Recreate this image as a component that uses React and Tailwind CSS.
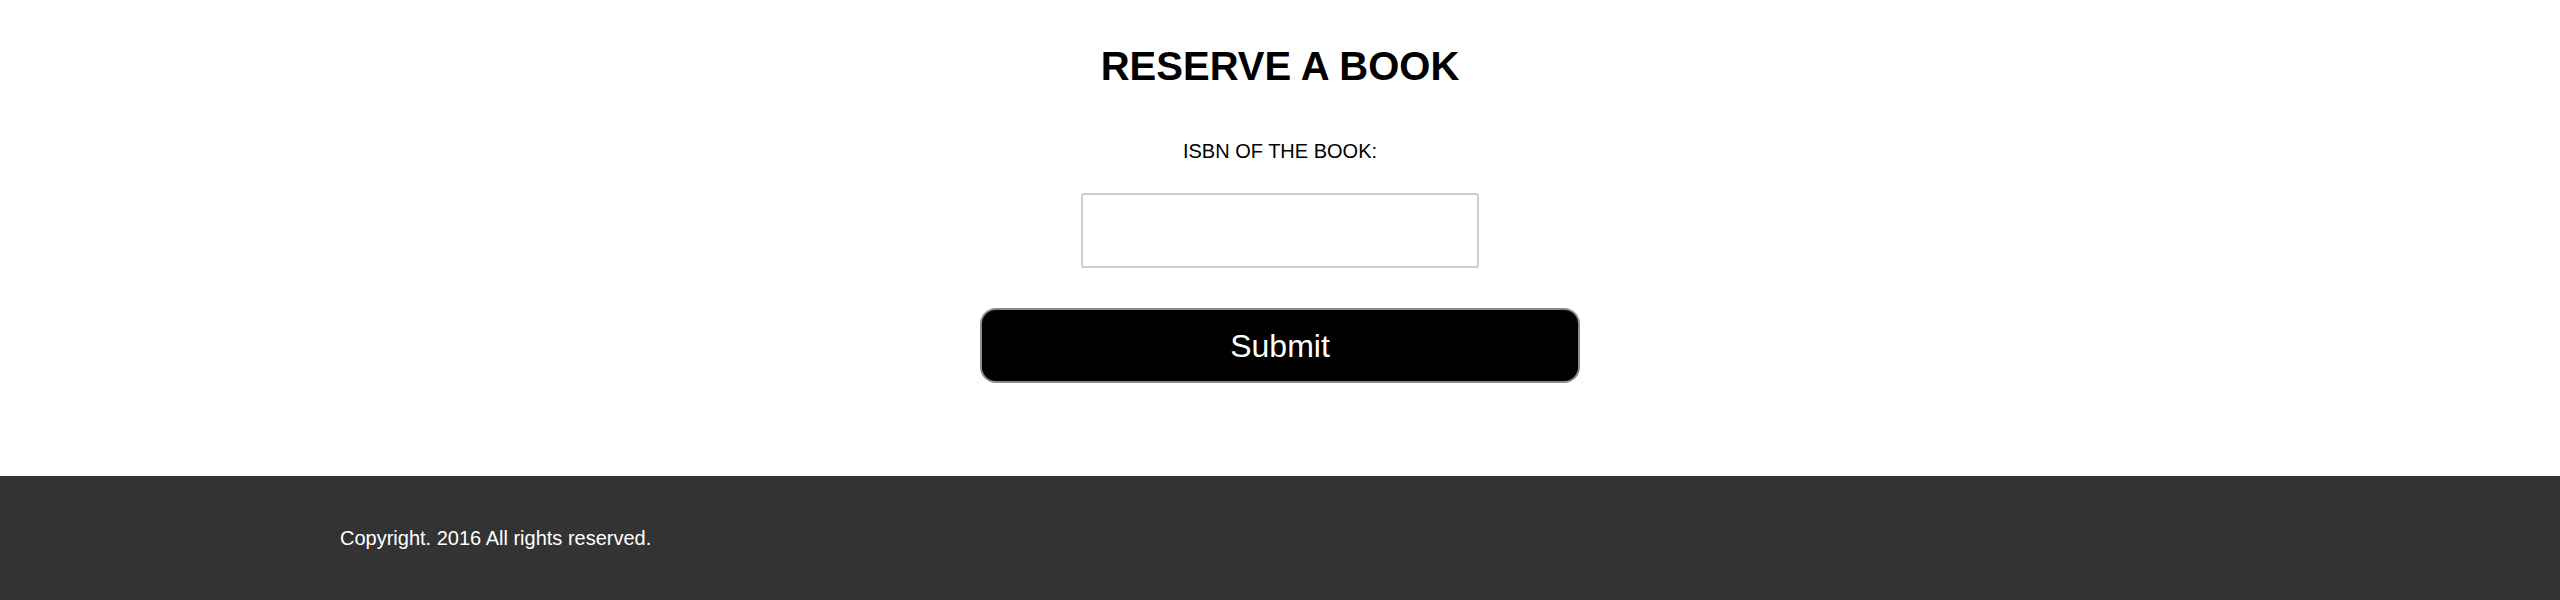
import React from "react";

const ReserveForm = () => {
  const [isbn, setIsbn] = React.useState("");

  return (
    <main className="h-[476px] flex flex-col items-center bg-white">
      <h1 className="mt-[42px] text-[40px] leading-[48px] font-bold text-black">RESERVE A BOOK</h1>

      <form className="flex flex-col items-center" onSubmit={(e) => e.preventDefault()}>
        <label htmlFor="isbn" className="mt-[49px] text-[20px] leading-[24px] text-black">
          ISBN OF THE BOOK:
        </label>
        <input
          id="isbn"
          type="text"
          value={isbn}
          onChange={(e) => setIsbn(e.target.value)}
          className="mt-[30px] w-[398px] h-[75px] border-2 border-[#cccccc] rounded-[3px] px-3 text-[20px] outline-none"
        />
        <button
          type="submit"
          className="mt-[40px] w-[600px] h-[75px] bg-black text-white text-[32px] border-2 border-[#8a8a8a] rounded-[16px] cursor-pointer"
        >
          Submit
        </button>
      </form>
    </main>
  );
};

const Footer = () => (
  <footer className="h-[124px] bg-[#333333] flex items-center pl-[340px]">
    <p className="text-white text-[20px]">Copyright. 2016 All rights reserved.</p>
  </footer>
);

export default function App() {
  return (
    <div className="w-full font-['Liberation_Sans',Arial,sans-serif]">
      <ReserveForm />
      <Footer />
    </div>
  );
}
